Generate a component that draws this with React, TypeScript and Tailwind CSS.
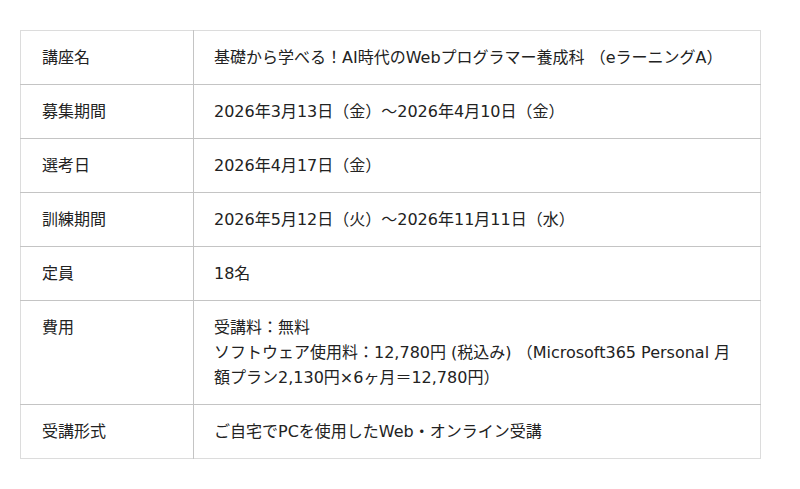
import React from 'react';

const rows: { label: string; value: React.ReactNode }[] = [
  { label: '講座名', value: '基礎から学べる！AI時代のWebプログラマー養成科 （eラーニングA）' },
  { label: '募集期間', value: '2026年3月13日（金）～2026年4月10日（金）' },
  { label: '選考日', value: '2026年4月17日（金）' },
  { label: '訓練期間', value: '2026年5月12日（火）～2026年11月11日（水）' },
  { label: '定員', value: '18名' },
  {
    label: '費用',
    value: (
      <>
        受講料：無料
        <br />
        ソフトウェア使用料：12,780円 (税込み) （Microsoft365 Personal 月額プラン2,130円×6ヶ月＝12,780円）
      </>
    ),
  },
  { label: '受講形式', value: 'ご自宅でPCを使用したWeb・オンライン受講' },
];

const App: React.FC = () => {
  return (
    <div className="bg-white w-[800px] h-[489px] pt-[30px] px-[20px] text-[16px] leading-[25px] text-[#222] font-['DejaVu_Sans','Noto_Sans_CJK_JP',sans-serif]">
      <table className="w-[741px] border-collapse border border-[#dcdcdc]">
        <tbody>
          {rows.map((row, i) => (
            <tr key={row.label} className={i < rows.length - 1 ? 'border-b border-[#c4c4c4]' : ''}>
              <th className="w-[173px] border-r border-[#c4c4c4] px-[21px] py-[14px] text-left align-top font-normal">
                {row.label}
              </th>
              <td className="px-[20px] py-[14px] align-top">{row.value}</td>
            </tr>
          ))}
        </tbody>
      </table>
    </div>
  );
};

export default App;
